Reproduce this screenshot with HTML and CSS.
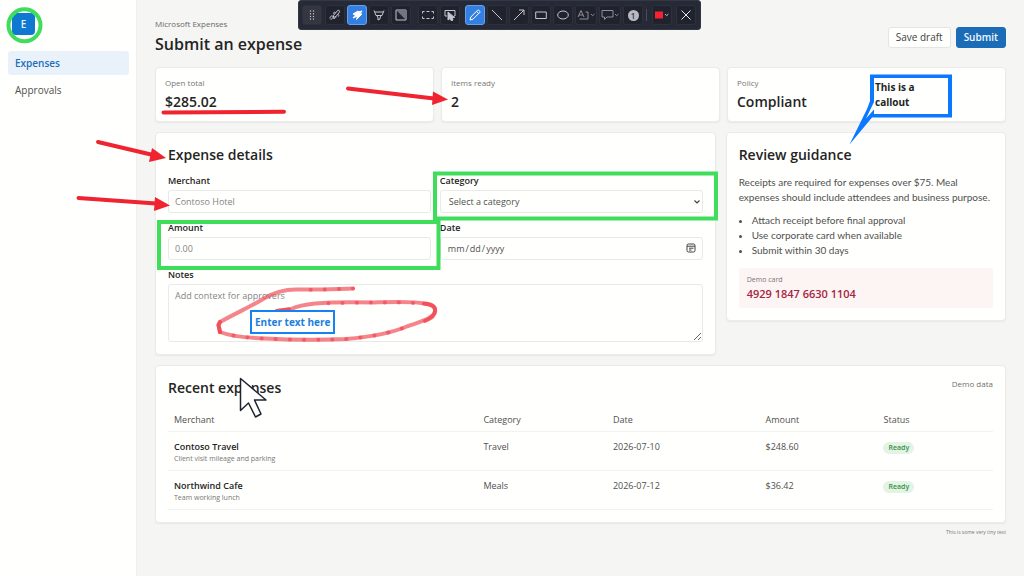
FILE: index.html
```html
<!DOCTYPE html>
<html lang="en">
<head>
<meta charset="utf-8">
<meta name="viewport" content="width=device-width, initial-scale=1">
<title>Submit an expense</title>
<link rel="stylesheet" href="styles.css">
</head>
<body>
<div class="app">
  <aside class="sidebar">
    <div class="logo">E</div>
    <nav class="nav">
      <a class="nav-link current" href="#expenses">Expenses</a>
      <a class="nav-link" href="#approvals">Approvals</a>
    </nav>
  </aside>

  <main class="main">
    <header class="page-header">
      <div>
        <p class="eyebrow">Microsoft Expenses</p>
        <h1>Submit an expense</h1>
      </div>
      <div class="actions">
        <button class="btn" type="button">Save draft</button>
        <button class="btn primary" type="submit" form="expense-form">Submit</button>
      </div>
    </header>

    <section class="stats">
      <div class="card stat"><p class="stat-label">Open total</p><p class="stat-value">$285.02</p></div>
      <div class="card stat"><p class="stat-label">Items ready</p><p class="stat-value">2</p></div>
      <div class="card stat"><p class="stat-label">Policy</p><p class="stat-value">Compliant</p></div>
    </section>

    <div class="columns">
      <section class="card panel">
        <h2>Expense details</h2>
        <form class="form" id="expense-form">
          <div class="field">
            <label for="merchant">Merchant</label>
            <input class="control" id="merchant" type="text" placeholder="Contoso Hotel">
          </div>
          <div class="field">
            <label for="category">Category</label>
            <div class="control-wrap">
              <select class="control select" id="category"><option>Select a category</option></select>
              <svg class="chevron" viewBox="0 0 8 8" aria-hidden="true"><path d="M1.500 2.500 4 5l2.500-2.500"/></svg>
            </div>
          </div>
          <div class="field">
            <label for="amount">Amount</label>
            <input class="control" id="amount" type="text" placeholder="0.00">
          </div>
          <div class="field">
            <label for="date">Date</label>
            <div class="control-wrap">
              <input class="control date" id="date" type="date">
              <svg class="calendar" viewBox="0 0 10 10" aria-hidden="true"><rect x="1" y="1" width="8" height="8" rx="1.500"/><path d="M1 3.200h8M3 5.200h4.500M3 7h2.500"/></svg>
            </div>
          </div>
          <div class="field wide">
            <label for="notes">Notes</label>
            <textarea class="control notes" id="notes" placeholder="Add context for approvers"></textarea>
          </div>
        </form>
      </section>

      <section class="card panel guidance">
        <h2>Review guidance</h2>
        <p>Receipts are required for expenses over $75. Meal expenses should include attendees and business purpose.</p>
        <ul>
          <li>Attach receipt before final approval</li>
          <li>Use corporate card when available</li>
          <li>Submit within 30 days</li>
        </ul>
        <div class="demo-card">
          <span class="demo-label">Demo card</span>
          <strong>4929 1847 6630 1104</strong>
        </div>
      </section>
    </div>

    <section class="card panel recent">
      <div class="recent-head"><h2>Recent expenses</h2><span>Demo data</span></div>
      <table>
        <colgroup><col class="c-merchant"><col class="c-category"><col class="c-date"><col class="c-amount"><col></colgroup>
        <thead><tr><th>Merchant</th><th>Category</th><th>Date</th><th>Amount</th><th>Status</th></tr></thead>
        <tbody>
          <tr><td><strong>Contoso Travel</strong><small>Client visit mileage and parking</small></td><td>Travel</td><td>2026-07-10</td><td>$248.60</td><td><span class="pill">Ready</span></td></tr>
          <tr><td><strong>Northwind Cafe</strong><small>Team working lunch</small></td><td>Meals</td><td>2026-07-12</td><td>$36.42</td><td><span class="pill">Ready</span></td></tr>
        </tbody>
      </table>
    </section>
    <p class="tiny">This is some very tiny text</p>
  </main>
</div>

<svg class="ink" width="1024" height="576" viewBox="0 0 1024 576" aria-hidden="true">
  <g fill="none" stroke="#40dc5c" stroke-width="4">
    <circle cx="24.500" cy="25.300" r="16"/>
    <rect x="435" y="173.500" width="281" height="45"/>
    <rect x="159" y="222" width="279.500" height="46"/>
  </g>
  <g stroke="#ef2430" stroke-width="4" stroke-linecap="round" fill="#ef2430">
    <path d="M163.500 112.500 284 111.800"/>
    <path d="M348 88.500 434 98.500"/><path stroke="none" d="M433 91.500 448 99.500 432 105z"/>
    <path d="M98 142 151 154.500"/><path stroke="none" d="M152 148 166 158 149 162z"/>
    <path d="M78.500 198 156 203.500"/><path stroke="none" d="M155 197 170 205.500 154 211z"/>
  </g>
  <g fill="none" stroke="#f04450" stroke-linecap="round" stroke-linejoin="round">
    <path stroke-width="4" opacity=".65" d="M353 288.500C335 289 315 290 298 289.500Q279 289 263 299C252 306 236 313 220 322L218.500 325 220 332C230 336 248 338 265 338.500C292 340 325 340 346 339C370 337 392 333 408 326C421 322 435 317 435 311Q436 304 424 303.500C413 301 390 302 374 302.500C354 302 333 302 315 303.500Q300 305 291 309L277 311"/>
    <path stroke-width="4" opacity=".65" stroke-dasharray="0.100 14" d="M353 288.500C335 289 315 290 298 289.500M220 332C230 336 248 338 265 338.500C292 340 325 340 346 339C370 337 392 333 408 326M413 303C390 302 374 302.500 315 303.500"/>
    <path stroke-width="4" opacity=".8" d="M220 322 218.500 325 220 332M425 321Q435 317 435 311 436 305 424 303.500M277 311 289 309.500"/>
  </g>
  <path fill="#fffffd" stroke="#1f2433" stroke-width="1.500" stroke-linejoin="round" d="M240.500 378.500V410.500L248.500 403 255.500 417 261 414 254.500 400H266z"/>
  <path fill="#fffffd" d="M874 78H948V114H874z"/>
  <path fill="#0a78ff" fill-rule="evenodd" d="M870 74.500H952V117.500H872L849.500 144.500 867 109 870 101zM874 78V102L866 118.500 874 109.500V114H948V78z"/>
</svg>
<div class="note callout">This is a callout</div>
<div class="note textbox">Enter text here</div>

<div class="toolbar" role="toolbar" aria-label="Annotation tools">
  <button class="tool grip" aria-label="Move"><svg viewBox="0 0 12 12"><path class="dots" d="M4.500 2v0M7.500 2v0M4.500 4.700v0M7.500 4.700v0M4.500 7.400v0M7.500 7.400v0M4.500 10v0M7.500 10v0"/></svg></button>
  <div class="group modes">
    <button class="tool" aria-label="Smart ink"><svg viewBox="0 0 12 12"><path d="M1 9.500c-.5-2 2.500-3.500 3-2s-2 3.500-2.500 2.500M4 9c1.500 1 3 0 3-1.500M4.500 6.500 8.500 1.500c.8-1 2.700.4 2 1.500L7 7.500 4.500 8.500zM6.500 3.500C5 2.500 4 4 5 5M8.500 5.500c2 0 1.500 2 .5 2"/></svg></button>
    <button class="tool on" aria-label="Highlight click"><svg viewBox="0 0 12 12"><path class="solid" d="m2 5 5-3 1 .8L11 2 9 5l2 0-5.500 5.500L6.500 7 2 9l2.500-3z"/></svg></button>
    <button class="tool" aria-label="Highlighter"><svg viewBox="0 0 12 12"><path d="M1 1.500 3 6.500h6l2-5M2 3h8M4 6.500 5 9v2l2-1V9l1-2.500"/></svg></button>
    <button class="tool" aria-label="Contrast"><svg viewBox="0 0 12 12"><path d="M1 1h10v10H1z"/><path class="shade" d="M1 1h10v10z"/></svg></button>
  </div>
  <div class="group capture">
    <button class="tool" aria-label="Select area"><svg viewBox="0 0 12 12"><path d="M.5 4.500v-2h2M4.500 2.500h3M9.500 2.500h2v2M11.500 7.500v2h-2M7.500 9.500h-3M2.500 9.500h-2v-2"/></svg></button>
    <button class="tool" aria-label="Select object"><svg viewBox="0 0 12 12"><path d="M3 7H1V1.500h10V7h-1"/><path class="solid" d="M4 3v8l2-1.500L7.500 12 9 11 8 8.500h2.500z"/></svg></button>
  </div>
  <div class="group draw">
    <button class="tool on" aria-label="Pen"><svg viewBox="0 0 12 12"><path d="M1 11 1.800 8 8.500 1.300c1-1 3.200 1.200 2.200 2.200L4 10.200zM7.500 2.300l2.200 2.200"/></svg></button>
    <button class="tool" aria-label="Line"><svg viewBox="0 0 12 12"><path d="m1 1 10 10"/></svg></button>
    <button class="tool" aria-label="Arrow"><svg viewBox="0 0 12 12"><path d="M1 11 11 1M6 1h5v5"/></svg></button>
    <button class="tool" aria-label="Rectangle"><svg viewBox="0 0 12 12"><path d="M.7 3h10.600v6.500H.7z"/></svg></button>
    <button class="tool" aria-label="Ellipse"><svg viewBox="0 0 12 12"><ellipse cx="6" cy="6" rx="5.300" ry="4"/></svg></button>
    <button class="tool dim drop" aria-label="Text"><svg viewBox="0 0 18 12"><path d="m1 8 3-6.500L7 8M2 6h4M8.500 3H11v7H2.500M14 5l1.700 1.700L17.400 5"/></svg></button>
    <button class="tool dim drop" aria-label="Callout"><svg viewBox="0 0 18 12"><path d="M1 1.500h11V8H6l-2.500 2.500V8H1zM14 5l1.700 1.700L17.400 5"/></svg></button>
    <button class="tool badge" aria-label="Number stamp"><span>1</span></button>
  </div>
  <span class="sep"></span>
  <button class="tool color" aria-label="Color"><svg viewBox="0 0 16 12"><path class="red" d="M1 2.500h8v7H1z"/><path d="m11 5 1.700 1.700L14.400 5"/></svg></button>
  <button class="tool close" aria-label="Close"><svg viewBox="0 0 12 12"><path d="m1.500 1.500 9 9M10.500 1.500l-9 9"/></svg></button>
</div>
</body>
</html>
```
FILE: styles.css
```css
* { box-sizing: border-box; }

body {
  margin: 0;
  background: #f5f5f3;
  color: #242424;
  font: 10px/12px "Open Sans", "Noto Sans", sans-serif;
}

p, h1, h2, ul { margin: 0; }
button, input, select, textarea { font: inherit; }

.app {
  display: grid;
  grid-template-columns: 137px minmax(0, 1fr);
  min-height: 100vh;
}

.sidebar {
  padding: 13px 7px 8px 8px;
  background: #fffffd;
  border-right: 1px solid #efefed;
}

.logo {
  display: grid;
  place-items: center;
  width: 23px;
  height: 22px;
  margin: 0 0 16px 4px;
  border-radius: 4px;
  background: #0f78d0;
  color: #e6f3ff;
  font-weight: 600;
}

.nav { display: grid; gap: 3px; }

.nav-link {
  padding: 6px 7px;
  border-radius: 3px;
  color: #505050;
  text-decoration: none;
}

.nav-link.current {
  background: #e9f1fa;
  color: #1b6fb8;
  font-weight: 600;
}

.main { padding: 18px 18px 8px; }

.page-header {
  display: flex;
  justify-content: space-between;
  align-items: center;
  margin-bottom: 11px;
}

.eyebrow { margin-bottom: 2px; color: #6a6a6a; font-size: 8px; }

h1 { font-size: 16px; line-height: 24px; font-weight: 600; }
h2 { margin-bottom: 10px; font-size: 14px; line-height: 20px; font-weight: 600; }

.actions { display: flex; gap: 5px; }

.btn {
  height: 21px;
  padding: 0 7px;
  border: 1px solid #e4e4e2;
  border-radius: 3px;
  background: #fffffd;
  color: #424242;
}

.btn.primary {
  border-color: #1a6cb6;
  background: #1a6cb6;
  color: #f2f8ff;
  font-weight: 600;
}

.card {
  border: 1px solid #ebebe9;
  border-radius: 4px;
  background: #fffffd;
  box-shadow: 0 1px 2px #0000000f;
}

.stats {
  display: grid;
  grid-template-columns: repeat(3, 1fr);
  gap: 7px;
  margin-bottom: 10px;
}

.stat { padding: 9px; }
.stat-label { margin-bottom: 3px; color: #777; font-size: 8px; }
.stat-value { font-size: 14px; line-height: 20px; font-weight: 600; }

.columns {
  display: grid;
  grid-template-columns: 2fr 1fr;
  gap: 10px;
  align-items: start;
  margin-bottom: 10px;
}

.panel { padding: 12px; }

.form {
  display: grid;
  grid-template-columns: 1fr 1fr;
  gap: 9px;
}

.field { display: grid; gap: 3px; min-width: 0; }
.field.wide { grid-column: 1 / -1; }
.field label { font-size: 9px; font-weight: 600; }

.control {
  display: block;
  width: 100%;
  height: 23px;
  padding: 0 6px;
  border: 1px solid #e9e9e7;
  border-radius: 3px;
  background: #fffffd;
  color: #505050;
  font-size: 9px;
}

.control::placeholder { color: #858585; opacity: 1; }
.control-wrap { position: relative; }
.select { padding: 0 8px; appearance: none; }
.date::-webkit-calendar-picker-indicator { opacity: 0; }
.notes { height: 58px; padding: 5px 6px; resize: vertical; }

.chevron, .calendar {
  position: absolute;
  fill: none;
  stroke: #424242;
  pointer-events: none;
}

.chevron { top: 8px; right: 2px; width: 8px; height: 8px; stroke-width: 1.2; }
.calendar { top: 6px; right: 7px; width: 10px; height: 10px; stroke-width: 1; }

.guidance p, .guidance ul {
  color: #505050;
  font-family: Lato, "Open Sans", sans-serif;
  line-height: 15px;
}

.guidance ul { margin: 8px 0 10px; padding-left: 13px; }

.demo-card {
  display: grid;
  gap: 2px;
  padding: 7px 8px;
  border-radius: 3px;
  background: #fdf4f4;
}

.demo-label { color: #777; font-size: 7px; line-height: 10px; }
.demo-card strong { color: #a52440; font-size: 11px; font-weight: 600; line-height: 14px; }

.recent-head { display: flex; justify-content: space-between; }
.recent-head span { color: #707070; font-size: 8px; }

table {
  width: 100%;
  table-layout: fixed;
  border-collapse: separate;
  border-spacing: 0;
  color: #505050;
  font-size: 9px;
}

.c-merchant { width: 37.5%; }
.c-category { width: 15.7%; }
.c-date { width: 18.5%; }
.c-amount { width: 14.3%; }

th, td {
  padding: 9px 6px 5px;
  border-bottom: 1px solid #f2f2f0;
  text-align: left;
  vertical-align: top;
}

th { padding: 6px 6px 5px; font-weight: 500; }
td strong, td small { display: block; }
td strong { color: #242424; font-weight: 600; }
td small { color: #777; font-size: 7px; }

.pill {
  display: inline-block;
  padding: 0 5px;
  border-radius: 6px;
  background: #e3f3e5;
  color: #36913e;
  font-size: 7px;
  font-weight: 600;
}

.tiny {
  margin-top: 3px;
  color: #777;
  font-size: 5px;
  text-align: right;
}

.ink { position: absolute; top: 0; left: 0; pointer-events: none; }

.note { position: absolute; font-weight: 700; }

.callout {
  top: 80px;
  left: 875px;
  width: 66px;
  color: #242424;
  line-height: 15px;
}

.textbox {
  top: 310px;
  left: 250px;
  padding: 4px 3px;
  border: 2px solid #1482f5;
  background: #fffffd;
  color: #1a7fe0;
  line-height: 12px;
}

.toolbar {
  position: absolute;
  top: 0;
  left: 298px;
  display: flex;
  align-items: center;
  height: 30px;
  padding: 0 4px 0 3px;
  border: 1px solid #343844;
  border-radius: 3px;
  background: #262a36;
}

.group { display: flex; gap: 2px; }
.modes { margin: 0 7px 0 3px; }
.capture { margin-right: 5px; }

.tool {
  display: grid;
  place-items: center;
  width: 20px;
  height: 20px;
  padding: 0;
  border: 1px solid #2d313c;
  border-radius: 3px;
  background: #20232e;
  color: #c4c7cf;
}

.tool svg {
  width: 12px;
  height: 12px;
  fill: none;
  stroke: currentColor;
  stroke-width: 1;
}

.tool .solid { fill: currentColor; }
.tool .shade { fill: #737681; stroke: none; }
.tool .red { fill: #f42332; stroke: none; }
.tool .dots { stroke-width: 1.4; stroke-linecap: round; }
.tool.grip { background: #343741; }
.tool.on { border-color: #64a3f3; background: #347fe2; color: #fff; }
.tool.dim { color: #8d909a; }
.tool.drop { width: 22px; }
.tool.drop svg { width: 18px; }
.tool.color svg { width: 16px; }
.tool.close { margin-left: 4px; color: #e8eaf0; }

.badge span {
  width: 11px;
  height: 11px;
  border-radius: 50%;
  background: #b7bac2;
  color: #343741;
  font-size: 8px;
  font-weight: 600;
  line-height: 11px;
}

.sep { width: 1px; height: 12px; margin: 0 5px 0 3px; background: #4a4e59; }
```
